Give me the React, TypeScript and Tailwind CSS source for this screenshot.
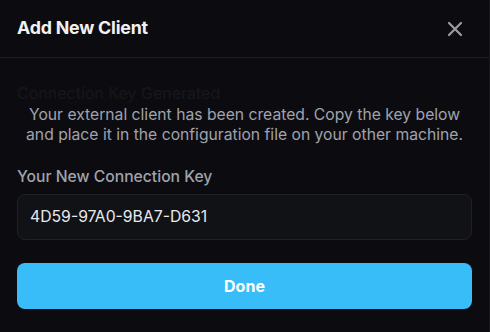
import React from "react";

export default function App() {
  return (
    <div
      className="w-[490px] h-[332px] bg-[#0c0c10] border-r border-[#17171c] overflow-hidden flex flex-col"
      style={{ fontFamily: "Inter, 'Noto Sans', sans-serif" }}
    >
      <div className="h-[58px] flex items-center justify-between pl-[17px] pr-[26px] border-b border-[#1e1e24] shrink-0">
        <h2 className="text-[17.8px] font-bold text-[#f1f1f3] tracking-[-0.2px]">Add New Client</h2>
        <svg width="16" height="16" viewBox="0 0 16 16" className="text-[#9a9ca5]">
          <path d="M2 2 L14 14 M14 2 L2 14" stroke="currentColor" strokeWidth="2.2" strokeLinecap="round" />
        </svg>
      </div>
      <div className="flex flex-col px-[17px] pt-[24px]">
        <div className="text-[16px] leading-[22px] text-[#17171c]">Connection Key Generated</div>
        <p className="text-[15.7px] leading-[20px] text-[#a0a3ad] text-center pt-[1px]">
          Your external client has been created. Copy the key below
          <br />
          and place it in the configuration file on your other machine.
        </p>
        <label className="mt-[22px] text-[15.7px] leading-[20px] font-medium text-[#a0a3ad]">
          Your New Connection Key
        </label>
        <div className="mt-[7px] h-[46px] rounded-lg border border-[#202127] bg-[#111216] flex items-center px-[12px]">
          <span className="text-[15.75px] text-[#e8e9ec]">4D59-97A0-9BA7-D631</span>
        </div>
        <button className="mt-[23px] h-[46px] rounded-lg bg-[#38bdf8] text-white text-[16px] font-bold flex items-center justify-center">
          Done
        </button>
      </div>
    </div>
  );
}
